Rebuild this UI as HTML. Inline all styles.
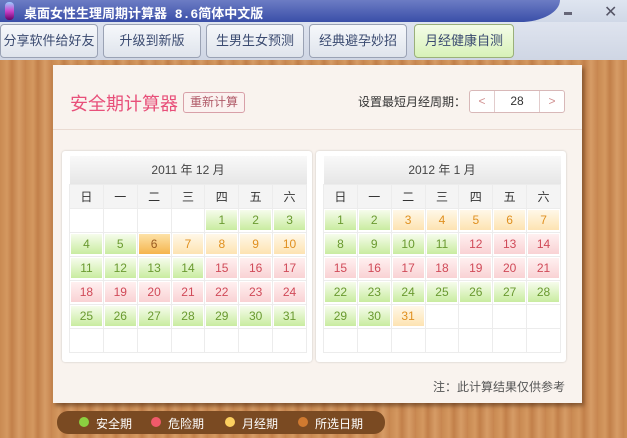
<!DOCTYPE html>
<html><head><meta charset="utf-8"><style>
*{margin:0;padding:0;box-sizing:border-box}
body{width:627px;height:438px;overflow:hidden;position:relative;font-family:"Liberation Sans","Noto Sans CJK SC",sans-serif;background:#d9dfec}
.title{position:absolute;left:0;top:0;width:627px;height:24px;background:linear-gradient(#dfe5f0,#cfd7e6)}
.tb{position:absolute;left:0;top:0;width:560px;height:22px;background:linear-gradient(#6c7cc4,#3a4fa8);border-bottom-right-radius:40px 22px}
.tb span{position:absolute;left:24px;top:3px;color:#fff;font-size:13px;font-weight:bold;font-family:"Liberation Mono","Noto Sans CJK SC",monospace}
.ico{position:absolute;left:5px;top:2px;width:9px;height:18px;background:linear-gradient(#9cf,#c4c,#606);border-radius:4px}
.tool{position:absolute;left:0;top:22px;width:627px;height:38px;background:linear-gradient(#dfe4ef,#cfd6e4)}
.btn{position:absolute;top:24px;height:34px;border:1px solid #9aa2b4;border-radius:4px;background:linear-gradient(#f6f8fb,#dfe4ec);font-size:13px;color:#3a4a70;text-align:center;line-height:32px;font-family:"Liberation Sans","Noto Sans CJK SC",sans-serif}
.wood{position:absolute;left:0;top:60px;width:627px;height:378px;background:repeating-linear-gradient(90deg,#c98a52 0,#d49860 7px,#c2804a 12px,#d69c66 19px,#c7854f 26px);}
.panel{position:absolute;left:53px;top:65px;width:529px;height:338px;background:#f9f3ee;box-shadow:2px 3px 4px rgba(60,30,10,.5)}
.hline{position:absolute;left:53px;top:129px;width:529px;height:1px;background:#eadbd2}
.h1{position:absolute;left:70px;top:90px;font-size:18px;color:#e8507a}
.rc{position:absolute;left:183px;top:92px;width:62px;height:21px;border:1px solid #d8a0a8;border-radius:3px;background:#fbf2f0;font-size:12px;color:#b05a68;text-align:center;line-height:19px}
.set{position:absolute;left:358px;top:93px;font-size:12px;color:#333}
.spin{position:absolute;left:469px;top:90px;width:96px;height:23px;border:1px solid #d8b8b8;border-radius:3px;background:#fff}
.spin b{position:absolute;top:0;width:24px;height:21px;font-weight:normal;color:#d09090;text-align:center;line-height:21px;font-size:12px}
.spin i{position:absolute;left:24px;top:0;width:46px;height:21px;border-left:1px solid #e2cccc;border-right:1px solid #e2cccc;font-style:normal;text-align:center;line-height:21px;font-size:12px;color:#333}
.cal{position:absolute;top:151px;width:250px;height:211px;background:#fff;border-radius:3px;box-shadow:0 0 2px rgba(0,0,0,.2)}
.cal table{position:absolute;left:7px;top:5px;border-collapse:collapse;width:238px}
.cal td{border:1px solid #ececec;width:34px;height:24px;text-align:center;font-size:12px;padding:1px 1px}
.cal .mh td{height:28px;background:linear-gradient(#f9f9f9,#e6e6e6);color:#444;border:none}
.cal .wk td{background:#f4f4f4;color:#333;height:24px}
.d{height:20px;line-height:20px;font-size:12px}
.g{background:linear-gradient(#f6fcec,#c9eca0);color:#6a9a30}
.r{background:linear-gradient(#fff0f0,#f9d2d4);color:#d04a58}
.y{background:linear-gradient(#fff8e8,#fde3b2);color:#e09020}
.s{background:linear-gradient(#fde2a8,#f5b54e);color:#9a5a20}
.note{position:absolute;left:433px;top:378px;font-size:12px;color:#555}
.leg{position:absolute;left:57px;top:411px;width:328px;height:23px;background:#7a4a22;border-radius:11px;color:#fff;font-size:12px}
.leg span{position:absolute;top:4px}
.dot{position:absolute;top:6px;width:10px;height:10px;border-radius:5px}
</style></head><body>
<div class="title"><div class="tb"><div class="ico"></div><span>桌面女性生理周期计算器 8.6简体中文版</span></div>
<div style="position:absolute;left:564px;top:12px;width:8px;height:3px;background:#667"></div>
<div style="position:absolute;left:604px;top:2px;font-size:16px;color:#556">✕</div></div>
<div class="tool"></div>
<div class="btn" style="left:0;width:98px">分享软件给好友</div>
<div class="btn" style="left:103px;width:98px">升级到新版</div>
<div class="btn" style="left:206px;width:98px">生男生女预测</div>
<div class="btn" style="left:309px;width:98px">经典避孕妙招</div>
<div class="btn" style="left:414px;width:100px;background:linear-gradient(#f4fce8,#d8f2b8);border-color:#9ab07a">月经健康自测</div>
<div class="wood"></div>
<div class="panel"></div><div class="hline"></div>
<div class="h1">安全期计算器</div><div class="rc">重新计算</div>
<div class="set">设置最短月经周期：</div>
<div class="spin"><b style="left:0">&lt;</b><i>28</i><b style="left:70px">&gt;</b></div>

<div class="cal" style="left:62px"><table>
<tr class="mh"><td colspan="7">2011 年 12 月</td></tr>
<tr class="wk"><td>日</td><td>一</td><td>二</td><td>三</td><td>四</td><td>五</td><td>六</td></tr>
<tr><td></td><td></td><td></td><td></td><td><div class="d g">1</div></td><td><div class="d g">2</div></td><td><div class="d g">3</div></td></tr>
<tr><td><div class="d g">4</div></td><td><div class="d g">5</div></td><td><div class="d s">6</div></td><td><div class="d y">7</div></td><td><div class="d y">8</div></td><td><div class="d y">9</div></td><td><div class="d y">10</div></td></tr>
<tr><td><div class="d g">11</div></td><td><div class="d g">12</div></td><td><div class="d g">13</div></td><td><div class="d g">14</div></td><td><div class="d r">15</div></td><td><div class="d r">16</div></td><td><div class="d r">17</div></td></tr>
<tr><td><div class="d r">18</div></td><td><div class="d r">19</div></td><td><div class="d r">20</div></td><td><div class="d r">21</div></td><td><div class="d r">22</div></td><td><div class="d r">23</div></td><td><div class="d r">24</div></td></tr>
<tr><td><div class="d g">25</div></td><td><div class="d g">26</div></td><td><div class="d g">27</div></td><td><div class="d g">28</div></td><td><div class="d g">29</div></td><td><div class="d g">30</div></td><td><div class="d g">31</div></td></tr>
<tr><td></td><td></td><td></td><td></td><td></td><td></td><td></td></tr>
</table></div>

<div class="cal" style="left:316px"><table>
<tr class="mh"><td colspan="7">2012 年 1 月</td></tr>
<tr class="wk"><td>日</td><td>一</td><td>二</td><td>三</td><td>四</td><td>五</td><td>六</td></tr>
<tr><td><div class="d g">1</div></td><td><div class="d g">2</div></td><td><div class="d y">3</div></td><td><div class="d y">4</div></td><td><div class="d y">5</div></td><td><div class="d y">6</div></td><td><div class="d y">7</div></td></tr>
<tr><td><div class="d g">8</div></td><td><div class="d g">9</div></td><td><div class="d g">10</div></td><td><div class="d g">11</div></td><td><div class="d r">12</div></td><td><div class="d r">13</div></td><td><div class="d r">14</div></td></tr>
<tr><td><div class="d r">15</div></td><td><div class="d r">16</div></td><td><div class="d r">17</div></td><td><div class="d r">18</div></td><td><div class="d r">19</div></td><td><div class="d r">20</div></td><td><div class="d r">21</div></td></tr>
<tr><td><div class="d g">22</div></td><td><div class="d g">23</div></td><td><div class="d g">24</div></td><td><div class="d g">25</div></td><td><div class="d g">26</div></td><td><div class="d g">27</div></td><td><div class="d g">28</div></td></tr>
<tr><td><div class="d g">29</div></td><td><div class="d g">30</div></td><td><div class="d y">31</div></td><td></td><td></td><td></td><td></td></tr>
<tr><td></td><td></td><td></td><td></td><td></td><td></td><td></td></tr>
</table></div>

<div class="note">注：此计算结果仅供参考</div>
<div class="leg">
<div class="dot" style="left:22px;background:#8bd040"></div><span style="left:39px">安全期</span>
<div class="dot" style="left:94px;background:#f05a6a"></div><span style="left:111px">危险期</span>
<div class="dot" style="left:168px;background:#fcd060"></div><span style="left:185px">月经期</span>
<div class="dot" style="left:241px;background:#d07a30"></div><span style="left:258px">所选日期</span>
</div>
</body></html>
